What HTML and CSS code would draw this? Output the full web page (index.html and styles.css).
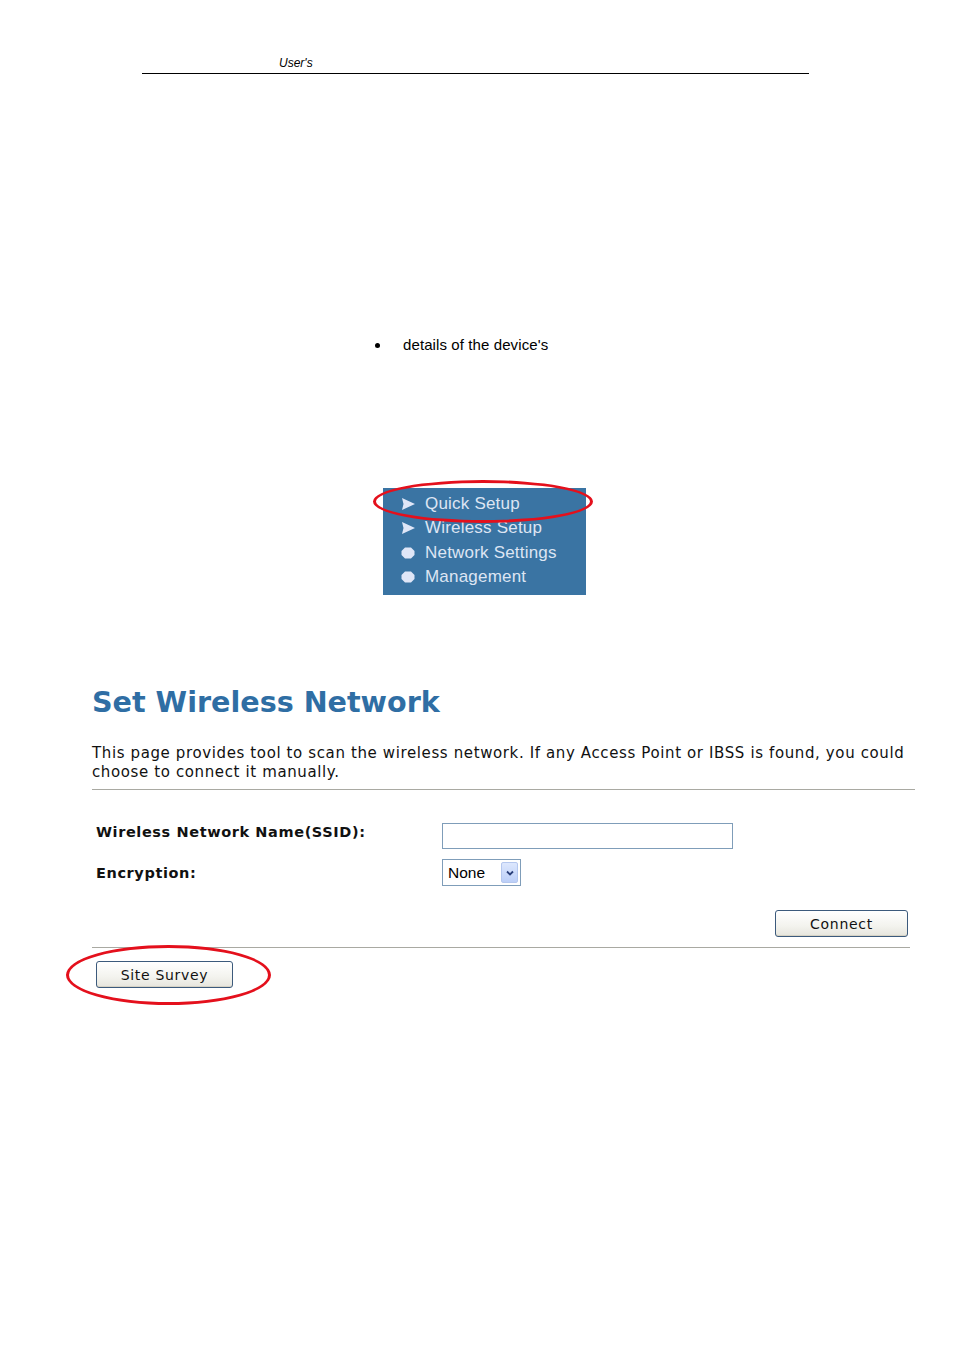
FILE: index.html
```html
<!DOCTYPE html>
<html>
<head>
<meta charset="utf-8">
<link rel="stylesheet" href="styles.css">
</head>
<body>
<div class="page">
  <header class="doc-header"><span class="doc-title">User's</span></header>

  <ul class="bullets">
    <li>details of the device's</li>
  </ul>

  <div class="menu-wrap">
    <nav class="menu">
      <div class="menu-item"><svg class="ico" viewBox="0 0 14 14"><path d="M1 1 L14 7 L1 13 L2.5 7 Z" fill="#dfe6f7"/></svg>Quick Setup</div>
      <div class="menu-item"><svg class="ico" viewBox="0 0 14 14"><path d="M1 1 L14 7 L1 13 L2.5 7 Z" fill="#dfe6f7"/></svg>Wireless Setup</div>
      <div class="menu-item"><svg class="ico" viewBox="0 0 14 14"><path d="M4 1.5 H10 L13.5 5 V9 L10 12.5 H4 L0.5 9 V5 Z" fill="#dfe6f7"/></svg>Network Settings</div>
      <div class="menu-item"><svg class="ico" viewBox="0 0 14 14"><path d="M4 1.5 H10 L13.5 5 V9 L10 12.5 H4 L0.5 9 V5 Z" fill="#dfe6f7"/></svg>Management</div>
    </nav>
    <div class="ring ring-menu"></div>
  </div>

  <section class="panel">
    <h1 class="title">Set Wireless Network</h1>
    <p class="desc">This page provides tool to scan the wireless network. If any Access Point or IBSS is found, you could choose to connect it manually.</p>
    <div class="rule"></div>
    <div class="form">
      <div class="row">
        <label class="lbl">Wireless Network Name(SSID):</label>
        <div class="field"><div class="input"></div></div>
      </div>
      <div class="row row2">
        <label class="lbl">Encryption:</label>
        <div class="field">
          <div class="select"><span class="sel-text">None</span><span class="sel-btn"><svg viewBox="0 0 10 10" width="10" height="10"><path d="M2 3.5 L5 6.5 L8 3.5" fill="none" stroke="#2a3f7a" stroke-width="1.8"/></svg></span></div>
        </div>
      </div>
    </div>
    <div class="actions"><button class="btn btn-connect">Connect</button></div>
    <div class="rule rule2"></div>
    <div class="survey">
      <button class="btn btn-survey">Site Survey</button>
      <div class="ring ring-survey"></div>
    </div>
  </section>
</div>
</body>
</html>
```

FILE: styles.css
```css
html, body {
  margin: 0;
  padding: 0;
  background: #ffffff;
}
.page {
  width: 954px;
  height: 1350px;
  position: relative;
  overflow: hidden;
}
.doc-header {
  margin: 56px 0 0 142px;
  width: 667px;
  height: 17px;
  border-bottom: 1px solid #000;
  font-family: "Liberation Sans", Arial, sans-serif;
  font-style: italic;
  font-size: 12px;
  line-height: 15px;
  color: #000;
}
.doc-title {
  display: block;
  padding-left: 137px;
}
.bullets {
  margin: 262px 0 0 0;
  padding: 0 0 0 403px;
  font-family: "Liberation Sans", Arial, sans-serif;
  font-size: 15px;
  line-height: 18px;
  letter-spacing: 0.1px;
  color: #000;
  list-style: none;
}
.bullets li {
  position: relative;
}
.bullets li::before {
  content: "";
  position: absolute;
  left: -28px;
  top: 7px;
  width: 5px;
  height: 5px;
  border-radius: 50%;
  background: #000;
}
.menu-wrap {
  position: relative;
  margin: 134px 0 0 383px;
  width: 203px;
}
.menu {
  background: #3a74a3;
  height: 107px;
  padding: 4px 0 0 18px;
  box-sizing: border-box;
  font-family: "Liberation Sans", Arial, sans-serif;
  font-size: 17px;
  letter-spacing: 0.2px;
  color: #dde5f3;
}
.menu-item {
  display: flex;
  align-items: center;
  height: 24.3px;
}
.ico {
  width: 14px;
  height: 14px;
  margin-right: 10px;
  flex: none;
}
.ring {
  position: absolute;
  border: 3px solid #e4101c;
  border-radius: 50%;
  box-sizing: border-box;
  pointer-events: none;
}
.ring-menu {
  left: -10px;
  top: -8px;
  width: 220px;
  height: 43px;
}
.panel {
  margin: 89px 0 0 92px;
  width: 823px;
  font-family: "DejaVu Sans", Verdana, sans-serif;
  color: #000;
}
.title {
  margin: 0;
  font-size: 28.6px;
  line-height: 36px;
  font-weight: bold;
  color: #2f6ea4;
}
.desc {
  margin: 24px 0 0 0;
  font-size: 15px;
  line-height: 19px;
  letter-spacing: 0.62px;
  color: #111;
}
.rule {
  height: 1px;
  background: #a9a9a2;
  margin-top: 7px;
}
.form {
  padding: 33px 0 0 4px;
}
.row {
  display: flex;
  align-items: flex-start;
  height: 26px;
}
.row2 {
  margin-top: 10px;
}
.lbl {
  width: 346px;
  font-weight: bold;
  font-size: 14.5px;
  letter-spacing: 0.6px;
  line-height: 18px;
  color: #111;
}
.row2 .lbl {
  padding-top: 5px;
}
.input {
  width: 291px;
  height: 26px;
  box-sizing: border-box;
  border: 1px solid #7f9db9;
  background: #fff;
}
.select {
  width: 79px;
  height: 27px;
  box-sizing: border-box;
  border: 1px solid #7f9db9;
  display: flex;
  align-items: center;
  justify-content: space-between;
  padding: 0 2px 0 5px;
  font-family: "Liberation Sans", Arial, sans-serif;
  font-size: 15.5px;
}
.sel-btn {
  width: 17px;
  height: 21px;
  box-sizing: border-box;
  border: 1px solid #b5c7ee;
  border-radius: 2px;
  background: linear-gradient(#dde7fd, #bccff8);
  display: flex;
  align-items: center;
  justify-content: center;
}
.actions {
  display: flex;
  justify-content: flex-end;
  padding: 25px 7px 0 0;
}
.btn {
  font-family: "DejaVu Sans", Verdana, sans-serif;
  font-size: 14px;
  letter-spacing: 0.7px;
  color: #111;
  height: 27px;
  border: 1px solid #3c5a7c;
  border-radius: 3px;
  background: linear-gradient(#ffffff, #f3f3ee 60%, #e6e5dd);
  padding: 0;
  box-shadow: inset 0 -1px 0 #d6d2c4;
}
.btn-connect {
  width: 133px;
}
.rule2 {
  margin-top: 10px;
  width: 818px;
}
.survey {
  position: relative;
  padding: 13px 0 0 4px;
}
.btn-survey {
  width: 137px;
}
.ring-survey {
  left: -26px;
  top: -3px;
  width: 205px;
  height: 60px;
}
```
